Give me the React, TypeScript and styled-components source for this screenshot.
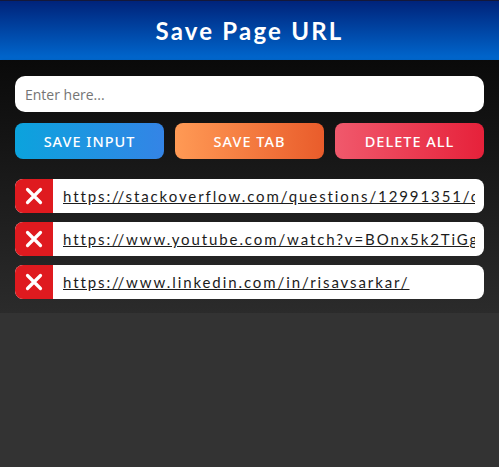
import * as React from 'react';
import styled, { createGlobalStyle } from 'styled-components';

const links = [
  'https://stackoverflow.com/questions/12991351/css-force-image-resize',
  'https://www.youtube.com/watch?v=BOnx5k2TiGg',
  'https://www.linkedin.com/in/risavsarkar/',
];

const GlobalStyle = createGlobalStyle`
  html, body {
    margin: 0;
    padding: 0;
    background: #333333;
    font-family: Lato, "Noto Sans", sans-serif;
  }
`;

const App = () => (
  <>
    <GlobalStyle />
    <Header>
      <Title>Save Page URL</Title>
    </Header>
    <Panel>
      <Input placeholder="Enter here..." />
      <Buttons>
        <Button variant="blue">save input</Button>
        <Button variant="orange">save tab</Button>
        <Button variant="red">delete all</Button>
      </Buttons>
      <ListWrapper>
        {links.map(link => (
          <Item key={link}>
            <Remove>
              <svg width="18" height="18" viewBox="0 0 18 18">
                <path d="M2.5 2.5 L15.5 15.5 M15.5 2.5 L2.5 15.5" stroke="#fff" strokeWidth="3.2" strokeLinecap="round" />
              </svg>
            </Remove>
            <LinkBox>
              <Link href="#">{link}</Link>
            </LinkBox>
          </Item>
        ))}
      </ListWrapper>
    </Panel>
  </>
);

const Header = styled.div`
  height: 60px;
  display: flex;
  align-items: center;
  justify-content: center;
  background: linear-gradient(to bottom, #00237a, #0068cf);
  border-top: 1px solid #14183a;
  box-sizing: border-box;
`;

const Title = styled.h1`
  margin: 0;
  color: #fff;
  font-family: Lato, sans-serif;
  font-size: 24px;
  font-weight: 700;
  letter-spacing: 2.2px;
`;

const Panel = styled.div`
  display: flex;
  flex-direction: column;
  padding: 16px 15px 14px;
  background: linear-gradient(to bottom, #0a0a0a, #2b2b2b);
  box-shadow: 0 2px 4px rgba(0, 0, 0, 0.35);
`;

const Input = styled.input`
  height: 36px;
  border: none;
  border-radius: 10px;
  padding: 0 10px;
  font-family: "Open Sans", sans-serif;
  font-size: 14px;
  outline: none;
  &::placeholder {
    color: #757575;
  }
`;

const gradients = {
  blue: 'linear-gradient(to right, #0ba3dd, #3484e6)',
  orange: 'linear-gradient(to right, #ff9a55, #e95c2b)',
  red: 'linear-gradient(to right, #f0596c, #e6213a)',
};

const Button = styled.button<{ variant: keyof typeof gradients }>`
  height: 36px;
  border: none;
  border-radius: 8px;
  background: ${p => gradients[p.variant]};
  color: #fff;
  font-family: "Noto Sans", sans-serif;
  font-size: 14.5px;
  font-weight: 500;
  letter-spacing: 1px;
  text-transform: uppercase;
  cursor: pointer;
`;

const Buttons = styled.div`
  display: grid;
  grid-template-columns: repeat(3, 1fr);
  gap: 11px;
  margin-top: 11px;
`;

const ListWrapper = styled.div`
  display: flex;
  flex-direction: column;
  gap: 9px;
  margin-top: 20px;
`;

const Item = styled.div`
  height: 34px;
  display: flex;
  border-radius: 8px;
  overflow: hidden;
  background: #fff;
`;

const Remove = styled.div`
  width: 38px;
  flex: none;
  display: flex;
  align-items: center;
  justify-content: center;
  background: #df1a1f;
  cursor: pointer;
`;

const LinkBox = styled.div`
  flex: 1;
  min-width: 0;
  display: flex;
  align-items: center;
  padding: 0 9px 0 10px;
  overflow: hidden;
`;

const Link = styled.a`
  white-space: nowrap;
  overflow: hidden;
  color: #1c1c1c;
  font-family: Lato, sans-serif;
  font-size: 15px;
  letter-spacing: 1.9px;
  text-decoration: underline;
`;

export default App;
